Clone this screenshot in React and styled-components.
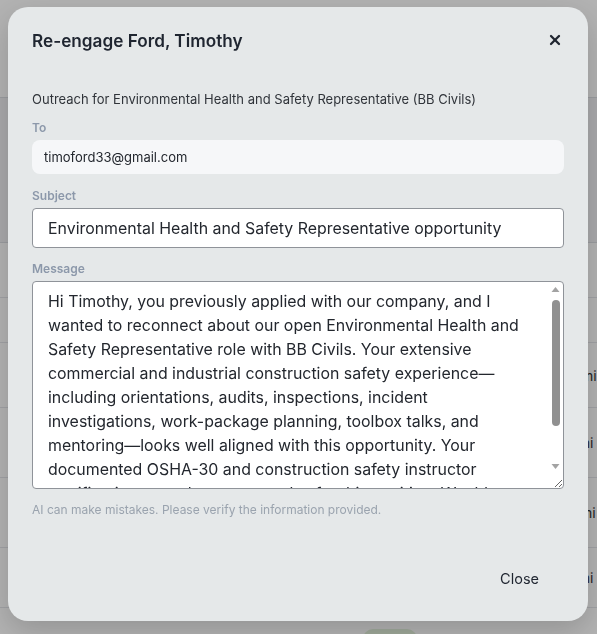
import React from "react";
import styled, { createGlobalStyle } from "styled-components";
import { X } from "lucide-react";

const GlobalStyle = createGlobalStyle`
  html, body {
    margin: 0;
    padding: 0;
    background: #ffffff;
    font-family: Inter, "Noto Sans", Arial, sans-serif;
  }
  * { box-sizing: border-box; }
`;

/* page behind the dialog: candidate table */
const Page = styled.div`
  width: 597px;
  height: 634px;
  overflow: hidden;
  background: #ffffff;
  display: flex;
  flex-direction: column;
`;

const TopBar = styled.div`
  height: 98px;
  flex-shrink: 0;
  border-bottom: 1px solid #dcdfe4;
`;

const Toolbar = styled.div`
  height: 145px;
  flex-shrink: 0;
  background: #f1f2f4;
  border-bottom: 1px solid #dcdfe4;
`;

const Row = styled.div`
  height: ${({ h }) => h}px;
  flex-shrink: 0;
  border-bottom: 1px solid #e5e7eb;
  display: grid;
  grid-template-columns: 363px 54px 128px auto;
  align-items: center;
  font-size: 14px;
  color: #333;
  white-space: nowrap;
`;

const Badge = styled.span`
  grid-column: 2;
  background: #e3f1dc;
  color: #3c6b2a;
  font-size: 12px;
  font-weight: 600;
  padding: 4px 8px;
  border-radius: 10px;
`;

const Distance = styled.span`
  grid-column: 4;
`;

/* dialog */
const Overlay = styled.div`
  position: fixed;
  inset: 0;
  background: rgba(0, 0, 0, 0.3);
  display: flex;
  justify-content: flex-start;
  align-items: flex-start;
  padding: 7px 0 0 8px;
`;

const Modal = styled.div`
  width: 580px;
  height: 614px;
  background: #e5e8e9;
  border-radius: 20px;
  box-shadow: 0 10px 30px rgba(0, 0, 0, 0.18);
  padding: 20px 24px 25px;
  display: flex;
  flex-direction: column;
`;

const Header = styled.div`
  height: 26px;
  display: flex;
  align-items: center;
  justify-content: space-between;
`;

const Title = styled.h2`
  margin: 0;
  font-size: 17.2px;
  font-weight: 600;
  color: #1f2530;
`;

const CloseIcon = styled.button`
  width: 20px;
  height: 20px;
  border: none;
  background: none;
  padding: 0;
  margin-right: -1px;
  display: flex;
  align-items: center;
  justify-content: center;
  color: #1f2530;
  cursor: pointer;
`;

const Intro = styled.p`
  margin: 37px 0 0;
  font-size: 13px;
  line-height: 18px;
  color: #30343a;
`;

const Field = styled.div`
  display: flex;
  flex-direction: column;
  gap: 4px;
  margin-top: ${({ top }) => top}px;
`;

const Label = styled.label`
  font-size: 12px;
  line-height: 16px;
  font-weight: 600;
  color: #8c98aa;
`;

const Recipient = styled.div`
  height: 34px;
  background: #f6f7f9;
  border-radius: 8px;
  padding: 0 12px;
  display: flex;
  align-items: center;
  font-size: 13px;
  color: #23272e;
`;

const Input = styled.input`
  height: 40px;
  width: 100%;
  border: 1px solid #8f9399;
  border-radius: 4px;
  background: #fff;
  padding: 0 15px;
  font: inherit;
  font-size: 15.9px;
  color: #23272e;
  outline: none;
`;

const MessageBox = styled.div`
  position: relative;
  height: 208px;
`;

const TextArea = styled.textarea`
  display: block;
  height: 208px;
  width: 100%;
  border: 1px solid #8f9399;
  border-radius: 4px;
  background: #fff;
  padding: 8px 34px 6px 15px;
  font: inherit;
  font-size: 15.9px;
  line-height: 24px;
  color: #23272e;
  outline: none;
  overflow: hidden;
  resize: vertical;
`;

/* vertical scroll bar drawn over the right edge of the message box */
const ScrollTrack = styled.div`
  position: absolute;
  top: 1px;
  right: 1px;
  width: 15px;
  height: 192px;
  display: flex;
  flex-direction: column;
  align-items: center;
  pointer-events: none;
`;

const Arrow = styled.svg`
  flex-shrink: 0;
  width: 15px;
  height: 15px;
  fill: #a3a3a3;
`;

const Thumb = styled.div`
  width: 8px;
  height: 126px;
  margin-top: 3px;
  border-radius: 4px;
  background: #909090;
`;

const Spacer = styled.div`
  flex: 1;
`;

const Note = styled.p`
  margin: 13px 0 0;
  font-size: 12px;
  line-height: 16px;
  color: #9aa3ae;
`;

const Footer = styled.div`
  margin-top: auto;
  display: flex;
  justify-content: flex-end;
`;

const TextButton = styled.button`
  border: none;
  background: none;
  font: inherit;
  font-size: 14.5px;
  color: #1f2530;
  padding: 9px 24px;
  margin-right: 1px;
  cursor: pointer;
`;

const message =
  "Hi Timothy, you previously applied with our company, and I wanted to reconnect about our open Environmental Health and Safety Representative role with BB Civils. Your extensive commercial and industrial construction safety experience\u2014including orientations, audits, inspections, incident investigations, work-package planning, toolbox talks, and mentoring\u2014looks well aligned with this opportunity. Your documented OSHA-30 and construction safety instructor certifications are also a strong plus for this position. Would you be open to a quick call this week to talk it through?";

const rows = [
  { h: 55 },
  { h: 45 },
  { h: 65, dist: "1042 mi" },
  { h: 70, dist: "1013 mi" },
  { h: 70, dist: "1027 mi" },
  { h: 60, dist: "1051 mi" },
  { h: 65, badge: "Strong", dist: "1066 mi" },
];

export default function App() {
  return (
    <>
      <GlobalStyle />
      <Page>
        <TopBar />
        <Toolbar />
        {rows.map((r, i) => (
          <Row key={i} h={r.h}>
            {r.badge && <Badge>{r.badge}</Badge>}
            {r.dist && <Distance>{r.dist}</Distance>}
          </Row>
        ))}
      </Page>
      <Overlay>
        <Modal role="dialog" aria-modal="true" aria-labelledby="reengage-title">
          <Header>
            <Title id="reengage-title">Re-engage Ford, Timothy</Title>
            <CloseIcon aria-label="Close">
              <X size={16} strokeWidth={3.4} />
            </CloseIcon>
          </Header>
          <Intro>
            Outreach for Environmental Health and Safety Representative (BB Civils)
          </Intro>
          <Field top={12}>
            <Label>To</Label>
            <Recipient>timoford33@gmail.com</Recipient>
          </Field>
          <Field top={14}>
            <Label>Subject</Label>
            <Input defaultValue="Environmental Health and Safety Representative opportunity" />
          </Field>
          <Field top={13}>
            <Label>Message</Label>
            <MessageBox>
              <TextArea defaultValue={message} />
              <ScrollTrack>
                <Arrow viewBox="0 0 15 15">
                  <polygon points="3.5,10 11.5,10 7.5,5" />
                </Arrow>
                <Thumb />
                <Spacer />
                <Arrow viewBox="0 0 15 15">
                  <polygon points="3.5,5 11.5,5 7.5,10" />
                </Arrow>
              </ScrollTrack>
            </MessageBox>
          </Field>
          <Note>AI can make mistakes. Please verify the information provided.</Note>
          <Footer>
            <TextButton>Close</TextButton>
          </Footer>
        </Modal>
      </Overlay>
    </>
  );
}
